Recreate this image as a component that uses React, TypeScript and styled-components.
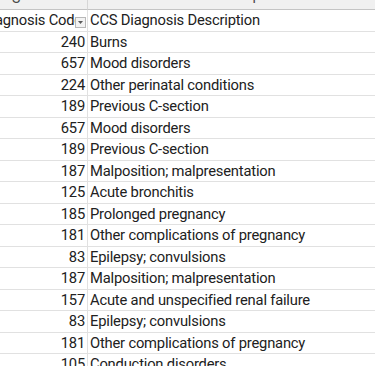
import React from "react";
import styled, { createGlobalStyle } from "styled-components";

const Global = createGlobalStyle`
  html, body { margin: 0; padding: 0; background: #ffffff; }
  body { overflow: hidden; }
  #root { width: 375px; height: 366px; overflow: hidden; }
`;

const Sheet = styled.div`
  width: 375px;
  height: 366px;
  overflow: hidden;
  display: grid;
  grid-template-columns: 88px 1fr;
  grid-template-rows: 10px;
  grid-auto-rows: 21.5px;
  font-family: Roboto, "Noto Sans", sans-serif;
  font-size: 14.75px;
  letter-spacing: -0.2px;
  color: #212121;
  background: #fff;
`;

const ColLetter = styled.div<{ $last?: boolean }>`
  background: #f0f0f0;
  border-bottom: 1px solid #c4c4c4;
  border-right: ${(p) => (p.$last ? "none" : "1px solid #d6d6d6")};
  overflow: hidden;
  display: flex;
  align-items: flex-end;
  box-sizing: border-box;
  font-size: 14px;
  color: #4a4a4a;
  line-height: 14px;
`;

const LetterText = styled.span<{ $x: number }>`
  margin-bottom: 4px;
  margin-left: ${(p) => p.$x}px;
`;

const Cell = styled.div<{ $num?: boolean; $last?: boolean }>`
  box-sizing: border-box;
  border-bottom: 1px solid #e1e1e1;
  border-right: ${(p) => (p.$last ? "none" : "1px solid #e1e1e1")};
  display: flex;
  align-items: center;
  justify-content: ${(p) => (p.$num ? "flex-end" : "flex-start")};
  padding: ${(p) => (p.$num ? "0 2px 0 0" : "0 0 0 2px")};
  white-space: nowrap;
  overflow: hidden;
  line-height: 20px;
  position: relative;
`;

const HeadClip = styled.div`
  flex: 1;
  min-width: 0;
  overflow: hidden;
  display: flex;
  justify-content: flex-end;
  margin-right: 10px;
`;

const HeadText = styled.span`
  margin-right: -7px;
`;

const FilterButton = styled.span`
  position: absolute;
  right: 1px;
  top: 7px;
  width: 11px;
  height: 11px;
  box-sizing: border-box;
  border: 1px solid #b8b8b8;
  background: #f3f3f3;
  display: flex;
  align-items: center;
  justify-content: center;
`;

const rows: [number, string][] = [
  [240, "Burns"],
  [657, "Mood disorders"],
  [224, "Other perinatal conditions"],
  [189, "Previous C-section"],
  [657, "Mood disorders"],
  [189, "Previous C-section"],
  [187, "Malposition; malpresentation"],
  [125, "Acute bronchitis"],
  [185, "Prolonged pregnancy"],
  [181, "Other complications of pregnancy"],
  [83, "Epilepsy; convulsions"],
  [187, "Malposition; malpresentation"],
  [157, "Acute and unspecified renal failure"],
  [83, "Epilepsy; convulsions"],
  [181, "Other complications of pregnancy"],
  [105, "Conduction disorders"],
];

export default function App() {
  return (
    <>
      <Global />
      <Sheet>
        <ColLetter>
          <LetterText $x={12}>S</LetterText>
        </ColLetter>
        <ColLetter $last>
          <LetterText $x={162}>T</LetterText>
        </ColLetter>
        <Cell $num>
          <HeadClip>
            <HeadText>CCS Diagnosis Code</HeadText>
          </HeadClip>
          <FilterButton>
            <svg width="5" height="3" viewBox="0 0 5 3">
              <path d="M0 0h5L2.5 3z" fill="#5a5a5a" />
            </svg>
          </FilterButton>
        </Cell>
        <Cell $last>CCS Diagnosis Description</Cell>
        {rows.map(([code, desc], i) => (
          <React.Fragment key={i}>
            <Cell $num>{code}</Cell>
            <Cell $last>{desc}</Cell>
          </React.Fragment>
        ))}
      </Sheet>
    </>
  );
}
